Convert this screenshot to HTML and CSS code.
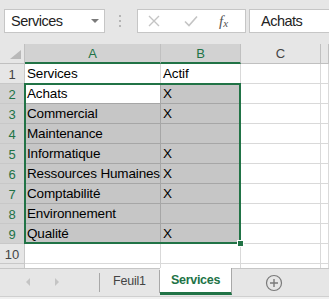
FILE: index.html
```html
<!DOCTYPE html>
<html lang="fr">
<head>
    <meta charset="UTF-8">
    <meta name="viewport" content="width=device-width, initial-scale=1.0">
    <title>Services</title>
    <link rel="stylesheet" href="styles.css">
</head>
<body>
    <!-- Name box + formula bar -->
    <div class="formula-bar">
        <div class="name-box"><span>Services</span><span class="drop"></span></div>
        <div class="grip"><i></i><i></i><i></i></div>
        <div class="fx-buttons">
            <svg class="btn-cancel" width="12" height="12" viewBox="0 0 12 12"><path d="M1 1 L11 11 M11 1 L1 11" stroke="#c4c4c4" stroke-width="1.4" fill="none"/></svg>
            <svg class="btn-enter" width="14" height="12" viewBox="0 0 14 12"><path d="M1 6.5 L5 10.5 L13 1.5" stroke="#c4c4c4" stroke-width="1.6" fill="none"/></svg>
            <span class="fx">f<sub>x</sub></span>
        </div>
        <div class="formula-input">Achats</div>
    </div>

    <!-- Sheet grid -->
    <div class="sheet">
        <div class="grid">
            <div class="corner"><span class="tri"></span></div>
            <div class="col-head sel">A</div>
            <div class="col-head sel">B</div>
            <div class="col-head">C</div>
            <div class="col-head"></div>

            <div class="row-head">1</div>
            <div class="cell">Services</div>
            <div class="cell">Actif</div>
            <div class="cell"></div>
            <div class="cell"></div>

            <div class="row-head sel">2</div>
            <div class="cell active">Achats</div>
            <div class="cell sel">X</div>
            <div class="cell"></div>
            <div class="cell"></div>

            <div class="row-head sel">3</div>
            <div class="cell sel">Commercial</div>
            <div class="cell sel">X</div>
            <div class="cell"></div>
            <div class="cell"></div>

            <div class="row-head sel">4</div>
            <div class="cell sel">Maintenance</div>
            <div class="cell sel"></div>
            <div class="cell"></div>
            <div class="cell"></div>

            <div class="row-head sel">5</div>
            <div class="cell sel">Informatique</div>
            <div class="cell sel">X</div>
            <div class="cell"></div>
            <div class="cell"></div>

            <div class="row-head sel">6</div>
            <div class="cell sel">Ressources Humaines</div>
            <div class="cell sel">X</div>
            <div class="cell"></div>
            <div class="cell"></div>

            <div class="row-head sel">7</div>
            <div class="cell sel">Comptabilité</div>
            <div class="cell sel">X</div>
            <div class="cell"></div>
            <div class="cell"></div>

            <div class="row-head sel">8</div>
            <div class="cell sel">Environnement</div>
            <div class="cell sel"></div>
            <div class="cell"></div>
            <div class="cell"></div>

            <div class="row-head sel">9</div>
            <div class="cell sel">Qualité</div>
            <div class="cell sel">X</div>
            <div class="cell"></div>
            <div class="cell"></div>

            <div class="row-head">10</div>
            <div class="cell"></div>
            <div class="cell"></div>
            <div class="cell"></div>
            <div class="cell"></div>

            <div class="row-head"></div>
            <div class="cell"></div>
            <div class="cell"></div>
            <div class="cell"></div>
            <div class="cell"></div>
        </div>
        <div class="selection"></div>
        <div class="fill-handle"></div>
    </div>

    <!-- Sheet tabs -->
    <div class="tabs">
        <div class="tab-nav">
            <span class="arrow left"></span>
            <span class="arrow right"></span>
        </div>
        <div class="tab-sep"></div>
        <div class="tab">Feuil1</div>
        <div class="tab active">Services</div>
        <svg class="add-sheet" width="18" height="18" viewBox="0 0 18 18">
            <circle cx="9" cy="9" r="7.5" stroke="#7a7a7a" stroke-width="1.2" fill="none"/>
            <path d="M9 5 V13 M5 9 H13" stroke="#7a7a7a" stroke-width="1.4"/>
        </svg>
    </div>
    <div class="status"></div>
</body>
</html>
```

FILE: styles.css
```css
/* Page */
body {
    margin: 0;
    width: 329px;
    height: 299px;
    overflow: hidden;
    background: #e6e6e6;
    font-family: 'Liberation Sans', Arial, sans-serif;
    color: #222;
}

/* Formula bar */
.formula-bar {
    display: flex;
    align-items: flex-start;
    height: 44px;
    padding-top: 9px;
    box-sizing: border-box;
}

.name-box {
    margin-left: 4px;
    width: 101px;
    height: 24px;
    box-sizing: border-box;
    border: 1px solid #c6c6c6;
    background: #fff;
    display: flex;
    align-items: center;
    justify-content: space-between;
    padding: 0 5px 0 6px;
    font-size: 14.5px;
    letter-spacing: -0.5px;
}

.drop {
    border-left: 4px solid transparent;
    border-right: 4px solid transparent;
    border-top: 4px solid #7a7a7a;
}

.grip {
    margin-left: 14px;
    padding-top: 6px;
    display: flex;
    flex-direction: column;
    gap: 3px;
}

.grip i {
    display: block;
    width: 2px;
    height: 2px;
    background: #b5b5b5;
}

.fx-buttons {
    margin-left: 16px;
    width: 109px;
    height: 24px;
    box-sizing: border-box;
    border: 1px solid #c6c6c6;
    background: #fff;
    display: flex;
    align-items: center;
}

.btn-cancel {
    margin-left: 10px;
}

.btn-enter {
    margin-left: 24px;
}

.fx {
    margin-left: 21px;
    font-family: 'Liberation Serif', 'Times New Roman', serif;
    font-style: italic;
    font-size: 15px;
    color: #555;
}

.fx sub {
    font-size: 11px;
    vertical-align: -1px;
}

.formula-input {
    margin-left: 3px;
    flex: 1;
    height: 24px;
    box-sizing: border-box;
    border: 1px solid #c6c6c6;
    border-right: none;
    background: #fff;
    padding-left: 11px;
    font-size: 14.5px;
    letter-spacing: -0.5px;
    line-height: 22px;
}

/* Grid */
.sheet {
    position: relative;
    height: 224px;
    overflow: hidden;
    background: #fff;
}

.grid {
    display: grid;
    grid-template-columns: 25px 136px 80px 80px 1fr;
    grid-auto-rows: 20px;
}

.grid > div {
    box-sizing: border-box;
    border-right: 1px solid #d9d9d9;
    border-bottom: 1px solid #d9d9d9;
}

.corner {
    position: relative;
    background: #e6e6e6;
    border-color: #c0c0c0 !important;
}

.tri {
    position: absolute;
    right: 3px;
    bottom: 4px;
    border-left: 11px solid transparent;
    border-bottom: 9px solid #b9b9b9;
}

.col-head {
    background: #e6e6e6;
    border-color: #c0c0c0 !important;
    text-align: center;
    font-size: 13px;
    line-height: 20px;
    color: #444;
}

.col-head.sel {
    background: #d2d2d2;
    color: #217346;
    border-bottom: 2px solid #217346 !important;
    line-height: 19px;
}

.row-head {
    background: #e6e6e6;
    border-color: #c8c8c8 !important;
    text-align: center;
    font-size: 13px;
    line-height: 21px;
    color: #444;
}

.row-head.sel {
    background: #d2d2d2;
    color: #217346;
}

.cell {
    padding-left: 2px;
    font-size: 13.5px;
    letter-spacing: -0.15px;
    line-height: 19px;
    white-space: nowrap;
    overflow: hidden;
    color: #000;
}

.cell.sel {
    background: #c6c6c6;
    border-color: #a6a6a6;
}

.cell.active {
    background: #fff;
    border-color: #a6a6a6;
}

/* Selection outline over A2:B9 */
.selection {
    position: absolute;
    left: 24px;
    top: 39px;
    width: 217px;
    height: 161px;
    box-sizing: border-box;
    border: 2px solid #217346;
    pointer-events: none;
}

.fill-handle {
    position: absolute;
    left: 237px;
    top: 196px;
    width: 5px;
    height: 5px;
    background: #217346;
    border: 1px solid #fff;
}

/* Sheet tabs */
.tabs {
    display: flex;
    align-items: flex-start;
    height: 27px;
    border-top: 1px solid #c6c6c6;
    border-bottom: 1px solid #cfcfcf;
}

.tab-nav {
    width: 99px;
    height: 26px;
    display: flex;
    align-items: center;
}

.arrow {
    border-top: 4px solid transparent;
    border-bottom: 4px solid transparent;
}

.arrow.left {
    margin-left: 26px;
    border-right: 4px solid #c4c4c4;
}

.arrow.right {
    margin-left: 25px;
    border-left: 4px solid #c4c4c4;
}

.tab-sep {
    width: 1px;
    height: 19px;
    margin-top: 4px;
    background: #a8a8a8;
}

.tab {
    width: 60px;
    height: 23px;
    margin-top: 1px;
    box-sizing: border-box;
    border-right: 1px solid #a8a8a8;
    padding-left: 13px;
    font-size: 12.5px;
    letter-spacing: -0.2px;
    line-height: 22px;
    color: #444;
}

.tab.active {
    width: 72px;
    height: 27px;
    margin-top: -1px;
    background: #fff;
    border-bottom: 3px solid #217346;
    padding-left: 11px;
    font-weight: bold;
    font-size: 12.5px;
    letter-spacing: -0.3px;
    line-height: 25px;
    color: #217346;
}

.add-sheet {
    margin-left: 33px;
    margin-top: 5px;
}

.status {
    height: 3px;
    background: #f0f0f0;
}
```
